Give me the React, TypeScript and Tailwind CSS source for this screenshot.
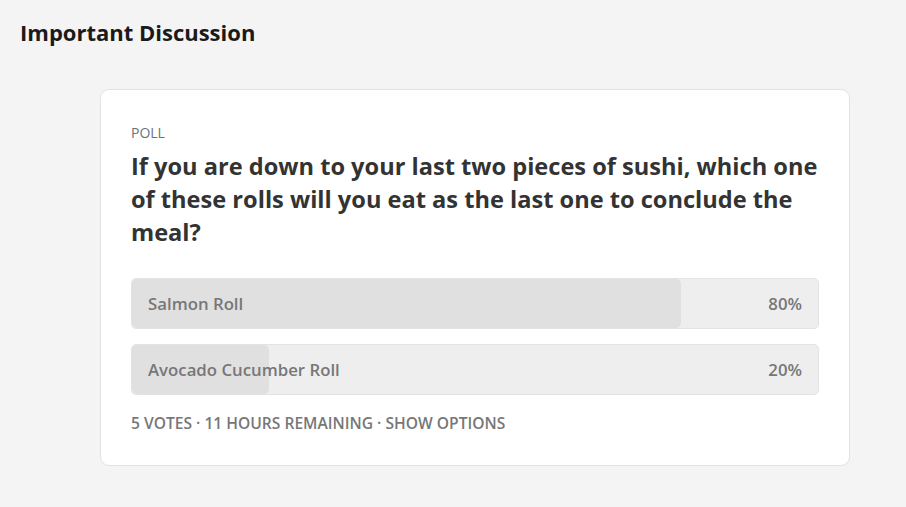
import React from "react";

interface Option {
  label: string;
  percent: number;
}

const options: Option[] = [
  { label: "Salmon Roll", percent: 80 },
  { label: "Avocado Cucumber Roll", percent: 20 },
];

function PollOption({ option }: { option: Option }) {
  return (
    <div className="relative h-[51px] rounded-[5px] border border-[#e3e3e3] bg-[#eeeeee] overflow-hidden">
      <div
        className="absolute inset-y-0 left-0 rounded-[5px] bg-[#e0e0e0]"
        style={{ width: `${option.percent}%` }}
      />
      <div className="relative flex h-full items-center justify-between px-4 text-[16.8px] font-semibold text-[#777777]">
        <span>{option.label}</span>
        <span>{option.percent}%</span>
      </div>
    </div>
  );
}

export default function App() {
  return (
    <div
      className="min-h-screen w-full bg-[#f4f4f4] pt-[16px] pb-10"
      style={{ fontFamily: '"Open Sans", "Noto Sans", sans-serif' }}
    >
      <h1 className="px-5 text-[22px] font-bold leading-[32px] text-[#1a1a1a]">
        Important Discussion
      </h1>
      <div className="ml-[100px] mt-[41px] w-[750px] rounded-[9px] border border-[#e2e2e2] bg-white px-[30px] pt-[34px] pb-[32px]">
        <div className="text-[14px] leading-[18px] text-[#6b7280]">POLL</div>
        <h2 className="mt-[8px] text-[23.6px] font-bold leading-[33px] text-[#333333]">
          If you are down to your last two pieces of sushi, which one of these
          rolls will you eat as the last one to conclude the meal?
        </h2>
        <div className="mt-[29px] flex flex-col gap-[15px]">
          {options.map((o) => (
            <PollOption key={o.label} option={o} />
          ))}
        </div>
        <div className="mt-[18px] text-[15.6px] font-semibold leading-[20px] text-[#777777]">
          5 VOTES · 11 HOURS REMAINING · SHOW OPTIONS
        </div>
      </div>
    </div>
  );
}
